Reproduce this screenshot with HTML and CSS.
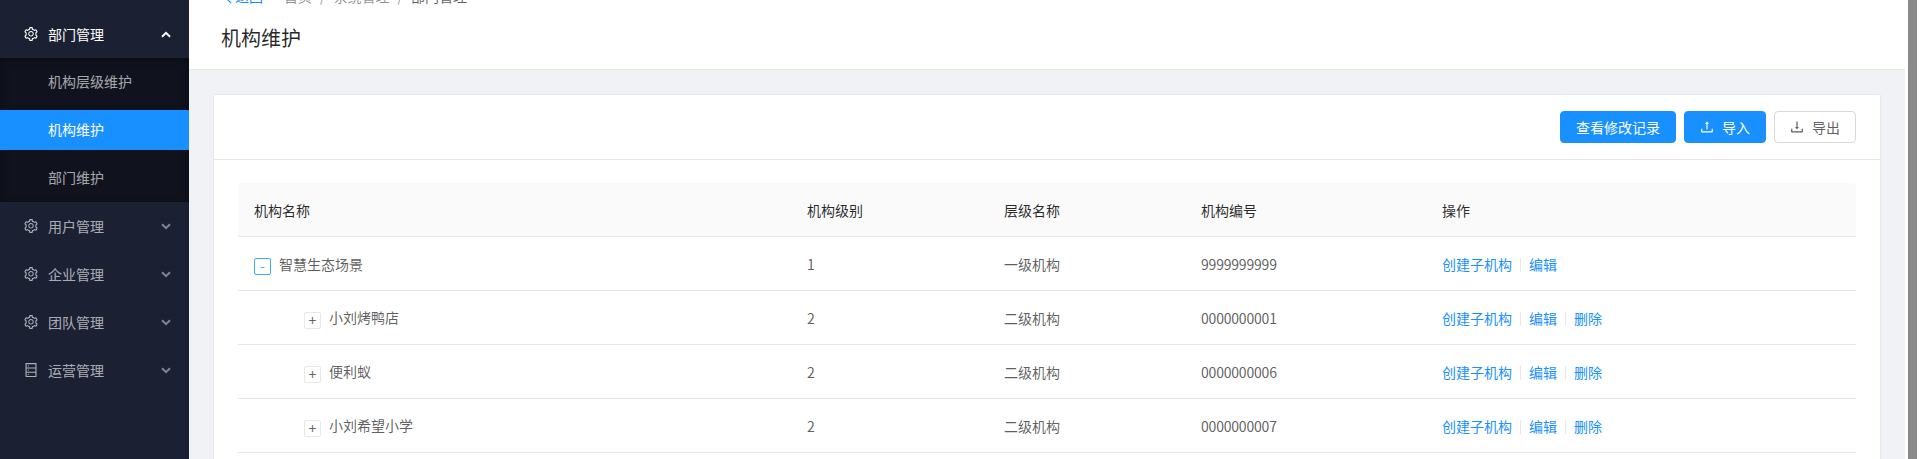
FILE: index.html
```html
<!DOCTYPE html>
<html lang="zh-CN">
<head>
<meta charset="utf-8">
<title>机构维护</title>
<link rel="stylesheet" href="styles.css">
</head>
<body>
<svg class="defs" aria-hidden="true">
  <symbol id="i-gear" viewBox="64 64 896 896"><path d="M924.8 625.7l-65.5-56c3.1-19 4.7-38.4 4.7-57.8s-1.6-38.8-4.7-57.8l65.5-56a32.03 32.03 0 0 0 9.3-35.2l-.9-2.6a443.74 443.74 0 0 0-79.7-137.9l-1.8-2.1a32.12 32.12 0 0 0-35.1-9.5l-81.3 28.9c-30-24.6-63.5-44-99.7-57.6l-15.7-85a32.05 32.05 0 0 0-25.8-25.7l-2.7-.5c-52.1-9.4-106.9-9.4-159 0l-2.7.5a32.05 32.05 0 0 0-25.8 25.7l-15.8 85.4a351.86 351.86 0 0 0-99 57.4l-81.9-29.1a32 32 0 0 0-35.1 9.5l-1.8 2.1a446.02 446.02 0 0 0-79.7 137.9l-.9 2.6c-4.5 12.5-.8 26.5 9.3 35.2l66.3 56.6c-3.1 18.8-4.6 38-4.6 57.1 0 19.2 1.5 38.4 4.6 57.1L99 625.5a32.03 32.03 0 0 0-9.3 35.2l.9 2.6c18.1 50.4 44.9 96.9 79.7 137.9l1.8 2.1a32.12 32.12 0 0 0 35.1 9.5l81.9-29.1c29.8 24.5 63.1 43.9 99 57.4l15.8 85.4a32.05 32.05 0 0 0 25.8 25.7l2.7.5a449.4 449.4 0 0 0 159 0l2.7-.5a32.05 32.05 0 0 0 25.8-25.7l15.7-85a350 350 0 0 0 99.7-57.6l81.3 28.9a32 32 0 0 0 35.1-9.5l1.8-2.1c34.8-41.1 61.6-87.5 79.7-137.9l.9-2.6c4.5-12.3.8-26.3-9.3-35zM788.3 465.9c2.5 15.1 3.8 30.6 3.8 46.1s-1.3 31-3.8 46.1l-6.6 40.1 74.7 63.9a370.03 370.03 0 0 1-42.6 73.6L721 702.8l-31.4 25.8c-23.9 19.6-50.5 35-79.3 45.8l-38.1 14.3-17.9 97a377.5 377.5 0 0 1-85 0l-17.9-97.2-37.8-14.5c-28.5-10.8-55-26.2-78.7-45.7l-31.4-25.9-93.4 33.2c-17-22.9-31.2-47.6-42.6-73.6l75.5-64.5-6.5-40c-2.4-14.9-3.7-30.3-3.7-45.5 0-15.3 1.2-30.6 3.7-45.5l6.5-40-75.5-64.5c11.3-26.1 25.6-50.7 42.6-73.6l93.4 33.2 31.4-25.9c23.7-19.5 50.2-34.9 78.7-45.7l37.9-14.3 17.9-97.2c28.1-3.2 56.8-3.2 85 0l17.9 97 38.1 14.3c28.7 10.8 55.4 26.2 79.3 45.8l31.4 25.8 92.8-32.9c17 22.9 31.2 47.6 42.6 73.6L781.8 426l6.5 39.9zM512 326c-97.2 0-176 78.8-176 176s78.8 176 176 176 176-78.8 176-176-78.8-176-176-176zm79.2 255.2A111.6 111.6 0 0 1 512 614c-29.9 0-58-11.7-79.2-32.8A111.6 111.6 0 0 1 400 502c0-29.9 11.7-58 32.8-79.2C454 401.6 482.1 390 512 390c29.9 0 58 11.6 79.2 32.8A111.6 111.6 0 0 1 624 502c0 29.9-11.7 58-32.8 79.2z"/></symbol>
  <symbol id="i-db" viewBox="64 64 896 896"><path d="M832 64H192c-17.7 0-32 14.3-32 32v832c0 17.7 14.3 32 32 32h640c17.7 0 32-14.3 32-32V96c0-17.7-14.3-32-32-32zm-600 72h560v208H232V136zm560 480H232V408h560v208zm0 272H232V680h560v208zM304 240a40 40 0 1 0 80 0 40 40 0 1 0-80 0zm0 272a40 40 0 1 0 80 0 40 40 0 1 0-80 0zm0 272a40 40 0 1 0 80 0 40 40 0 1 0-80 0z"/></symbol>
  <symbol id="i-up" viewBox="64 64 896 896"><path d="M400 317.7h73.9V656c0 4.4 3.6 8 8 8h60c4.4 0 8-3.6 8-8V317.7H624c6.7 0 10.4-7.7 6.3-12.9L518.3 163a8 8 0 0 0-12.6 0l-112 141.7c-4.1 5.3-.4 13 6.3 13zM878 626h-60c-4.4 0-8 3.6-8 8v154H214V634c0-4.4-3.6-8-8-8h-60c-4.4 0-8 3.6-8 8v198c0 17.7 14.3 32 32 32h684c17.7 0 32-14.3 32-32V634c0-4.4-3.6-8-8-8z"/></symbol>
  <symbol id="i-down" viewBox="64 64 896 896"><path d="M505.7 661a8 8 0 0 0 12.6 0l112-141.7c4.1-5.2.4-12.9-6.3-12.9h-74.1V168c0-4.4-3.6-8-8-8h-60c-4.4 0-8 3.6-8 8v338.3H400c-6.7 0-10.4 7.7-6.3 12.9l112 141.8zM878 626h-60c-4.4 0-8 3.6-8 8v154H214V634c0-4.4-3.6-8-8-8h-60c-4.4 0-8 3.6-8 8v198c0 17.7 14.3 32 32 32h684c17.7 0 32-14.3 32-32V634c0-4.4-3.6-8-8-8z"/></symbol>
  <symbol id="i-chev" viewBox="0 0 10 7"><path d="M1 1.2 5 5.2 9 1.2" fill="none" stroke="currentColor" stroke-width="2"/></symbol>
  <symbol id="i-chev-up" viewBox="0 0 10 7"><path d="M1 5.8 5 1.8 9 5.8" fill="none" stroke="currentColor" stroke-width="2"/></symbol>
  <symbol id="i-left" viewBox="0 0 6 10"><path d="M5.2 .8 1 5 5.2 9.2" fill="none" stroke="currentColor" stroke-width="1.2"/></symbol>
</svg>

<div class="app">
  <aside class="sidebar">
    <nav class="menu">
      <div class="menu-item is-open">
        <svg class="menu-icon"><use href="#i-gear"/></svg>
        <span class="menu-label">部门管理</span>
        <svg class="menu-arrow"><use href="#i-chev-up"/></svg>
      </div>
      <div class="submenu">
        <a class="sub-item">机构层级维护</a>
        <a class="sub-item is-active">机构维护</a>
        <a class="sub-item">部门维护</a>
      </div>
      <div class="menu-item">
        <svg class="menu-icon"><use href="#i-gear"/></svg>
        <span class="menu-label">用户管理</span>
        <svg class="menu-arrow"><use href="#i-chev"/></svg>
      </div>
      <div class="menu-item">
        <svg class="menu-icon"><use href="#i-gear"/></svg>
        <span class="menu-label">企业管理</span>
        <svg class="menu-arrow"><use href="#i-chev"/></svg>
      </div>
      <div class="menu-item">
        <svg class="menu-icon"><use href="#i-gear"/></svg>
        <span class="menu-label">团队管理</span>
        <svg class="menu-arrow"><use href="#i-chev"/></svg>
      </div>
      <div class="menu-item">
        <svg class="menu-icon"><use href="#i-db"/></svg>
        <span class="menu-label">运营管理</span>
        <svg class="menu-arrow"><use href="#i-chev"/></svg>
      </div>
    </nav>
  </aside>

  <main class="main">
    <header class="page-header">
      <div class="breadcrumb">
        <a class="back"><svg class="back-icon"><use href="#i-left"/></svg>返回</a>
        <span class="crumb">首页</span>
        <span class="sep">/</span>
        <span class="crumb">系统管理</span>
        <span class="sep">/</span>
        <span class="crumb is-current">部门管理</span>
      </div>
      <h1 class="page-title">机构维护</h1>
    </header>

    <div class="content">
      <section class="card">
        <div class="card-head">
          <button class="btn btn-primary">查看修改记录</button>
          <button class="btn btn-primary"><svg class="btn-icon"><use href="#i-up"/></svg>导入</button>
          <button class="btn btn-default"><svg class="btn-icon"><use href="#i-down"/></svg>导出</button>
        </div>
        <div class="card-body">
          <table class="table">
            <colgroup>
              <col class="col-name"><col class="col-level"><col class="col-levelname"><col class="col-code"><col class="col-actions">
            </colgroup>
            <thead>
              <tr><th>机构名称</th><th>机构级别</th><th>层级名称</th><th>机构编号</th><th>操作</th></tr>
            </thead>
            <tbody>
              <tr>
                <td><span class="expander is-open">-</span><span class="tree-text">智慧生态场景</span></td>
                <td>1</td><td>一级机构</td><td class="code">9999999999</td>
                <td><a class="link">创建子机构</a><i class="divider"></i><a class="link">编辑</a></td>
              </tr>
              <tr>
                <td class="is-child"><span class="expander">+</span><span class="tree-text">小刘烤鸭店</span></td>
                <td>2</td><td>二级机构</td><td class="code">0000000001</td>
                <td><a class="link">创建子机构</a><i class="divider"></i><a class="link">编辑</a><i class="divider"></i><a class="link">删除</a></td>
              </tr>
              <tr>
                <td class="is-child"><span class="expander">+</span><span class="tree-text">便利蚁</span></td>
                <td>2</td><td>二级机构</td><td class="code">0000000006</td>
                <td><a class="link">创建子机构</a><i class="divider"></i><a class="link">编辑</a><i class="divider"></i><a class="link">删除</a></td>
              </tr>
              <tr>
                <td class="is-child"><span class="expander">+</span><span class="tree-text">小刘希望小学</span></td>
                <td>2</td><td>二级机构</td><td class="code">0000000007</td>
                <td><a class="link">创建子机构</a><i class="divider"></i><a class="link">编辑</a><i class="divider"></i><a class="link">删除</a></td>
              </tr>
            </tbody>
          </table>
        </div>
      </section>
    </div>
  </main>

  <div class="scrollbar"><div class="scrollbar-thumb"></div></div>
</div>
</body>
</html>
```

FILE: styles.css
```css
* { box-sizing: border-box; }

html, body {
  margin: 0;
  height: 459px;
  overflow: hidden;
}

body {
  font-family: "Noto Sans CJK SC", "Open Sans", sans-serif;
  font-size: 14px;
  line-height: 22px;
  color: rgba(0, 0, 0, 0.65);
  background: #fff;
}

.defs { display: none; }

.app {
  display: flex;
  height: 459px;
  overflow: hidden;
}

/* Sidebar */
.sidebar {
  flex: 0 0 189px;
  background: #1c2033;
  padding-top: 14px;
}

.menu { display: flex; flex-direction: column; }

.menu-item {
  display: flex;
  align-items: center;
  height: 40px;
  margin-bottom: 8px;
  padding: 0 18px 0 24px;
  color: rgba(255, 255, 255, 0.65);
}

.menu-item.is-open {
  color: #fff;
  margin-bottom: 4px;
}

.menu-icon {
  width: 14px;
  height: 14px;
  margin-right: 10px;
  fill: currentColor;
  flex: none;
}

.menu-label { flex: 1; }

.menu-arrow {
  width: 10px;
  height: 7px;
  flex: none;
  color: rgba(255, 255, 255, 0.45);
}

.is-open .menu-arrow { color: #fff; }

.submenu {
  display: flex;
  flex-direction: column;
  gap: 8px;
  padding: 4px 0;
  margin-bottom: 4px;
  background: #10131e;
  box-shadow: inset 0 2px 8px rgba(0, 0, 0, 0.45);
}

.sub-item {
  height: 40px;
  line-height: 39px;
  padding-left: 48px;
  color: rgba(255, 255, 255, 0.65);
}

.sub-item.is-active {
  background: #1890ff;
  color: #fff;
}

/* Main */
.main {
  flex: 1;
  min-width: 0;
  display: flex;
  flex-direction: column;
  background: #f0f2f5;
}

.page-header {
  flex: none;
  height: 85px;
  margin-top: -15px;
  padding-left: 32px;
  background: #fff;
  border-bottom: 1px solid #e8e8e8;
}

.breadcrumb {
  display: flex;
  height: 22px;
  margin-bottom: 17px;
}

.back {
  display: flex;
  align-items: center;
  width: 63px;
  padding-left: 5px;
  color: #1890ff;
}

.back-icon {
  width: 6px;
  height: 10px;
  margin: 5px 3px 0 0;
}

.crumb { color: rgba(0, 0, 0, 0.45); }
.crumb.is-current { color: rgba(0, 0, 0, 0.65); }
.sep { margin: 0 8px; color: rgba(0, 0, 0, 0.45); }

.page-title {
  margin: 0;
  font-size: 20px;
  font-weight: 400;
  line-height: 28px;
  color: rgba(0, 0, 0, 0.85);
}

.content {
  flex: 1;
  display: flex;
  flex-direction: column;
  padding: 24px 24px 0;
}

.card {
  flex: 1;
  background: #fff;
  border: 1px solid #e8e8e8;
  border-bottom: 0;
  border-radius: 2px 2px 0 0;
}

.card-head {
  display: flex;
  justify-content: flex-end;
  gap: 8px;
  padding: 16px 24px;
  border-bottom: 1px solid #e8e8e8;
}

.btn {
  display: inline-flex;
  align-items: center;
  justify-content: center;
  height: 32px;
  padding: 0 15px;
  border: 1px solid transparent;
  border-radius: 4px;
  font: inherit;
  white-space: nowrap;
}

.btn-primary {
  background: #1890ff;
  border-color: #1890ff;
  color: #fff;
}

.btn-default {
  background: #fff;
  border-color: #d9d9d9;
  color: rgba(0, 0, 0, 0.65);
}

.btn-icon {
  width: 14px;
  height: 14px;
  margin-right: 8px;
  fill: currentColor;
}

.card-body { padding: 23px 24px 0; }

/* Table */
.table {
  width: 100%;
  table-layout: fixed;
  border-collapse: separate;
  border-spacing: 0;
}

.col-name { width: 553px; }
.col-level { width: 197px; }
.col-levelname { width: 197px; }
.col-code { width: 241px; }
.col-actions { width: 430px; }

.table th,
.table td {
  height: 54px;
  padding: 0 16px;
  text-align: left;
  font-weight: 400;
  border-bottom: 1px solid #e8e8e8;
  white-space: nowrap;
}

.table th {
  background: #fafafa;
  color: rgba(0, 0, 0, 0.85);
}

.table th:first-child { border-top-left-radius: 4px; }
.table th:last-child { border-top-right-radius: 4px; }

.table td.is-child { padding-left: 66px; }
.table td.code { letter-spacing: -0.2px; }

.expander {
  display: inline-block;
  width: 17px;
  height: 17px;
  margin-right: 8px;
  border: 1px solid #e8e8e8;
  border-radius: 2px;
  background: #fff;
  text-align: center;
  line-height: 14px;
  vertical-align: -3px;
}

.expander.is-open {
  border-color: #40a9ff;
  color: #40a9ff;
  line-height: 13px;
  vertical-align: -1px;
}

.link { color: #1890ff; }

.divider {
  display: inline-block;
  width: 1px;
  height: 14px;
  margin: 0 8px;
  background: #e8e8e8;
  vertical-align: -2px;
}

/* Window scrollbar */
.scrollbar {
  flex: 0 0 15px;
  padding: 0 3px;
  background: #fff;
}

.scrollbar-thumb {
  height: 100%;
  background: #8a8a8a;
}
```
